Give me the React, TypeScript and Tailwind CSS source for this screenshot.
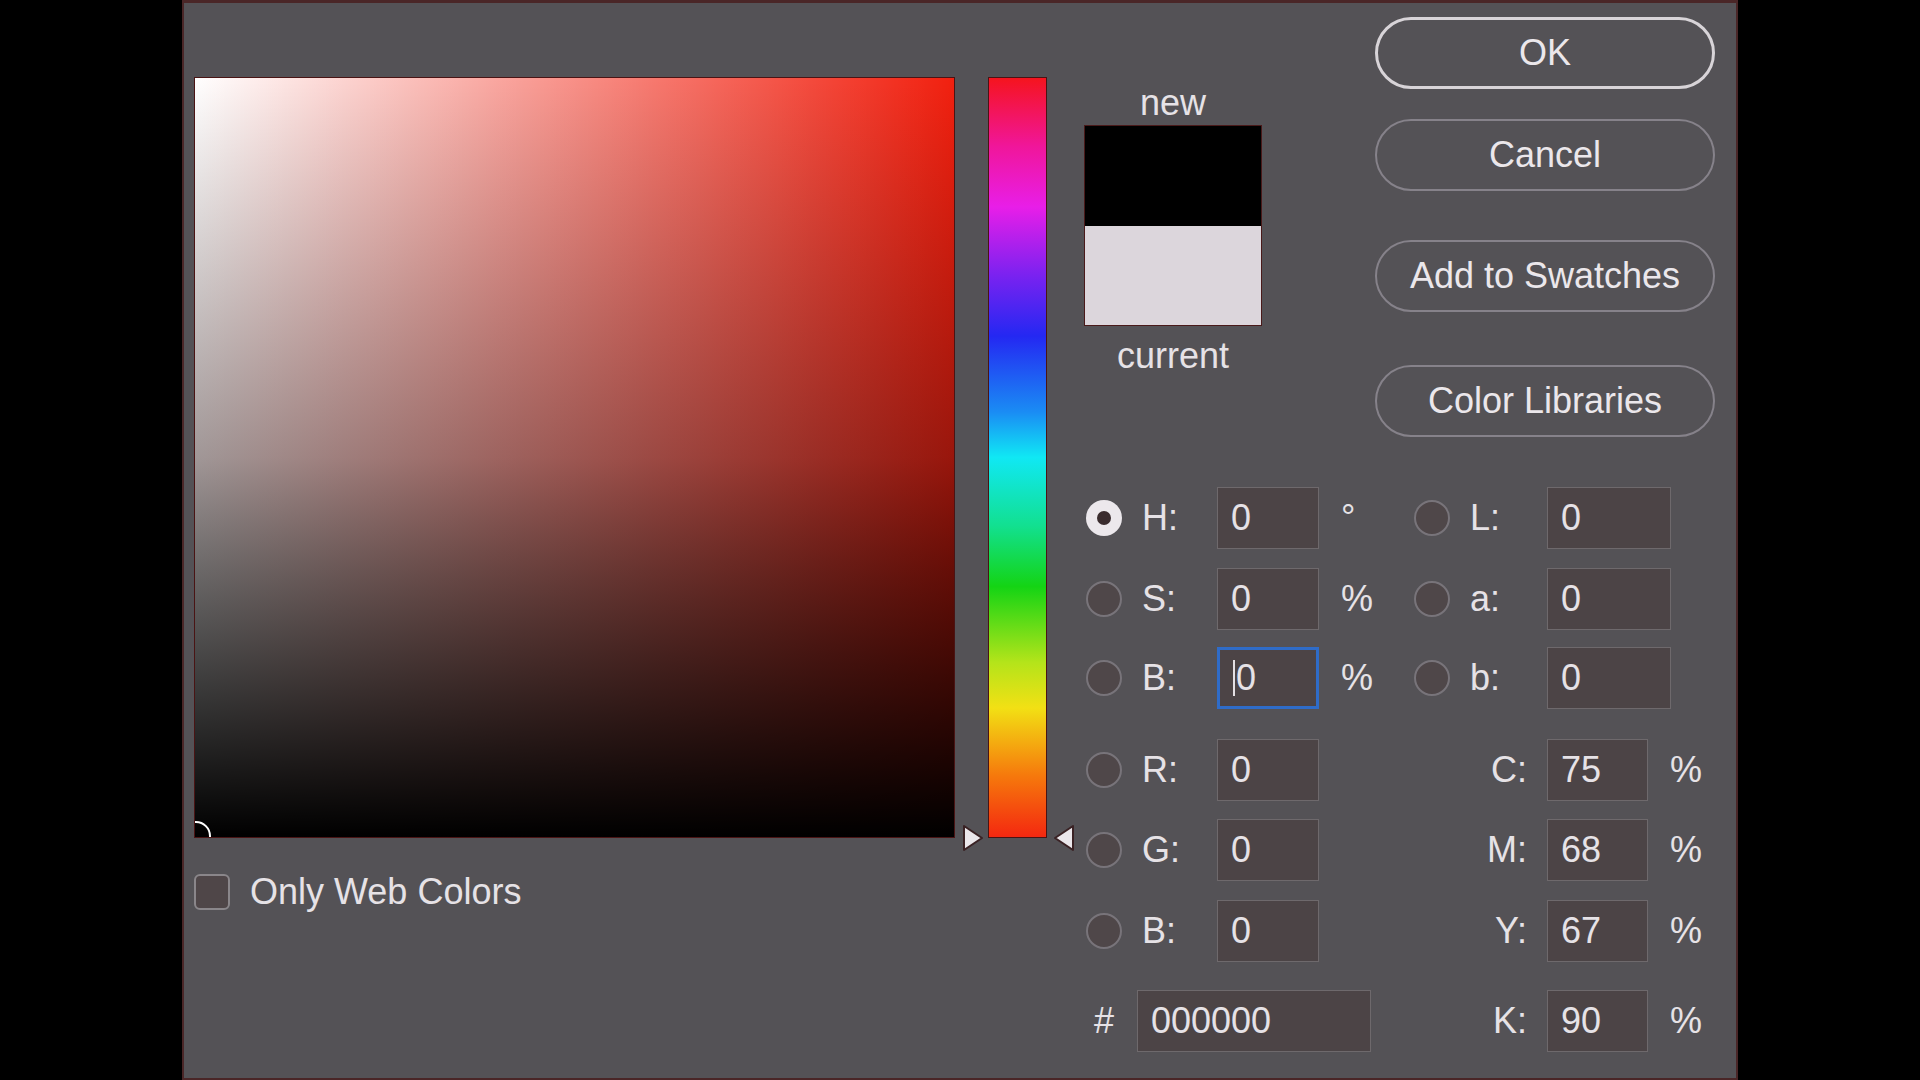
import React from "react";

const FONT = { fontFamily: "'Liberation Sans', Arial, sans-serif" };

function Radio({ on }: { on?: boolean }) {
  return on ? (
    <div className="flex h-[36px] w-[36px] shrink-0 items-center justify-center rounded-full bg-[#ece8ec]">
      <div className="h-[14px] w-[14px] rounded-full bg-[#3a2c2e]" />
    </div>
  ) : (
    <div className="h-[36px] w-[36px] shrink-0 rounded-full border-2 border-[#78747a] bg-[#4f4749]" />
  );
}

function Field({ value, w, active }: { value: string; w: string; active?: boolean }) {
  return (
    <div
      className={`flex h-[62px] shrink-0 items-center bg-[#4c4446] px-[13px] ${w} ${
        active ? "border-[3px] border-[#2f6cc8]" : "border border-[#6e696c]"
      }`}
    >
      {active && <span className="mr-[1px] h-[36px] w-[2px] bg-[#e4e0e4]" />}
      <span>{value}</span>
    </div>
  );
}

function PillButton({ label, primary, className }: { label: string; primary?: boolean; className?: string }) {
  return (
    <button
      className={`flex h-[72px] w-[340px] items-center justify-center rounded-full text-[#ebe7eb] ${
        primary ? "border-[3px] border-[#d8d4d8]" : "border-2 border-[#86828a]"
      } ${className ?? ""}`}
    >
      {label}
    </button>
  );
}

// H/S/B rows with a Lab counterpart on the right
function DualRow({ l, lv, unit, r, rv, active, on, className }: {
  l: string; lv: string; unit?: string; r: string; rv: string; active?: boolean; on?: boolean; className?: string;
}) {
  return (
    <div className={`flex h-[62px] items-center ${className ?? ""}`}>
      <div className="flex w-[328px] items-center">
        <Radio on={on} />
        <span className="ml-[20px] w-[55px]">{l}</span>
        <span className="ml-[20px]" />
        <Field value={lv} w="w-[102px]" active={active} />
        <span className="ml-[22px] w-[40px]">{unit}</span>
      </div>
      <div className="flex items-center">
        <Radio />
        <span className="ml-[20px] w-[57px]">{r}</span>
        <span className="ml-[20px]" />
        <Field value={rv} w="w-[124px]" />
      </div>
    </div>
  );
}

// R/G/B rows with CMYK on the right
function CmykRow({ l, lv, r, rv, className }: { l: string; lv: string; r: string; rv: string; className?: string }) {
  return (
    <div className={`flex h-[62px] items-center ${className ?? ""}`}>
      <div className="flex w-[328px] items-center">
        <Radio />
        <span className="ml-[20px] w-[55px]">{l}</span>
        <span className="ml-[20px]" />
        <Field value={lv} w="w-[102px]" />
      </div>
      <span className="w-[113px] text-right">{r}</span>
      <span className="ml-[20px]" />
      <Field value={rv} w="w-[101px]" />
      <span className="ml-[22px]">%</span>
    </div>
  );
}

function Triangle({ dir }: { dir: "left" | "right" }) {
  return (
    <svg width="24" height="30" viewBox="0 0 24 30">
      {dir === "right" ? (
        <path d="M3 3 L21 15 L3 27 Z" fill="#ebe7eb" stroke="#3a2224" strokeWidth="2" strokeLinejoin="round" />
      ) : (
        <path d="M21 3 L3 15 L21 27 Z" fill="#ebe7eb" stroke="#3a2224" strokeWidth="2" strokeLinejoin="round" />
      )}
    </svg>
  );
}

export default function App() {
  return (
    <div className="flex h-[1080px] w-full bg-black" style={FONT}>
      <div className="ml-[182px] flex h-[1080px] w-[1556px] border-2 border-t-[3px] border-[#4a2627] bg-[#545256] text-[36px] leading-none text-[#e6e2e6]">
        {/* colour field */}
        <div className="flex flex-col pl-[10px] pt-[74px]">
          <div className="relative h-[761px] w-[761px] overflow-hidden border border-[#4a1414] bg-[#f2200f]">
            <div className="absolute inset-0 bg-gradient-to-r from-white to-transparent" />
            <div className="absolute inset-0 bg-gradient-to-b from-transparent via-[rgba(30,8,8,0.42)] to-black" />
            <div className="absolute bottom-[-14px] left-[-14px] h-[30px] w-[30px] rounded-full border-2 border-white" />
          </div>
          <label className="mt-[36px] flex items-center">
            <span className="h-[36px] w-[36px] rounded-md border-2 border-[#8a868a] bg-[#4f4648]" />
            <span className="ml-[20px]">Only Web Colors</span>
          </label>
        </div>

        {/* hue slider */}
        <div className="relative ml-[8px] w-[111px] pt-[74px]">
          <div className="ml-[25px] h-[761px] w-[59px] border border-[#4a1414] bg-[linear-gradient(to_bottom,#f5141e_0%,#f0169a_9%,#e81ee8_17%,#7a22f0_26%,#2428f2_34%,#1a8cf4_44%,#10e8f4_50%,#12e090_59%,#14d414_67%,#b4e41a_77%,#f2e014_83%,#f6780c_92%,#f42810_100%)]" />
          <div className="absolute left-[-2px] top-[820px]">
            <Triangle dir="right" />
          </div>
          <div className="absolute right-[-2px] top-[820px]">
            <Triangle dir="left" />
          </div>
        </div>

        {/* right side */}
        <div className="ml-[10px] flex flex-col">
          <div className="flex">
            <div className="flex w-[178px] flex-col items-center pt-[82px]">
              <span className="leading-none">new</span>
              <div className="mt-[4px] flex h-[201px] w-[178px] flex-col border border-[#4a1a1a]">
                <div className="h-[100px] bg-black" />
                <div className="flex-1 bg-[#dcd6dc]" />
              </div>
              <span className="mt-[12px] leading-none">current</span>
            </div>
            <div className="ml-[113px] flex flex-col pt-[14px]">
              <PillButton label="OK" primary />
              <PillButton label="Cancel" className="mt-[30px]" />
              <PillButton label="Add to Swatches" className="mt-[49px]" />
              <PillButton label="Color Libraries" className="mt-[53px]" />
            </div>
          </div>

          <div className="ml-[2px] mt-[50px] flex flex-col">
            <DualRow l="H:" lv="0" unit="°" r="L:" rv="0" on />
            <DualRow l="S:" lv="0" unit="%" r="a:" rv="0" className="mt-[19px]" />
            <DualRow l="B:" lv="0" unit="%" r="b:" rv="0" active className="mt-[17px]" />
            <CmykRow l="R:" lv="0" r="C:" rv="75" className="mt-[30px]" />
            <CmykRow l="G:" lv="0" r="M:" rv="68" className="mt-[18px]" />
            <CmykRow l="B:" lv="0" r="Y:" rv="67" className="mt-[19px]" />
            <div className="mt-[28px] flex h-[62px] items-center">
              <span className="w-[36px] text-center">#</span>
              <div className="ml-[15px]">
                <Field value="000000" w="w-[234px]" />
              </div>
              <span className="w-[156px] text-right">K:</span>
              <span className="ml-[20px]" />
              <Field value="90" w="w-[101px]" />
              <span className="ml-[22px]">%</span>
            </div>
          </div>
        </div>
      </div>
      <div className="flex-1 bg-black" />
    </div>
  );
}
